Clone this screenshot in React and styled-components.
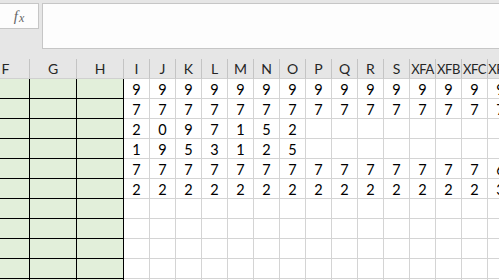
import React from 'react'
import styled, { createGlobalStyle } from 'styled-components'

const GlobalStyle = createGlobalStyle`
  html, body {
    margin: 0;
    padding: 0;
    background: #e6e6e6;
    overflow: hidden;
  }
`

const Window = styled.div`
  width: 499px;
  height: 280px;
  overflow: hidden;
  background: #e6e6e6;
  display: flex;
  flex-direction: column;
`

const FormulaBar = styled.div`
  height: 59px;
  flex: none;
  display: flex;
  align-items: flex-start;
  gap: 3px;
  padding-top: 3px;
  box-sizing: border-box;
`

const FxBox = styled.div`
  width: 39px;
  height: 26px;
  box-sizing: border-box;
  background: #fdfdfd;
  border: 1px solid #c6c6c6;
  border-left: none;
  display: flex;
  align-items: center;
  justify-content: center;
  font-family: "Liberation Serif", serif;
  font-style: italic;
  font-size: 15px;
  color: #666;

  span {
    font-size: 12px;
    margin-left: 1px;
    position: relative;
    top: 2px;
  }
`

const FormulaInput = styled.div`
  flex: 1;
  height: 46px;
  box-sizing: border-box;
  background: #fdfdfd;
  border: 1px solid #c6c6c6;
  border-right: none;
`

const SheetClip = styled.div`
  flex: 1;
  overflow: hidden;
`

const Sheet = styled.div`
  margin-left: -18px;
  display: grid;
  grid-template-columns: 48px 47px 47px repeat(15, 26px);
  grid-auto-rows: 20px;
  font-family: Lato, "Open Sans", sans-serif;
`

const Header = styled.div`
  box-sizing: border-box;
  background: #e6e6e6;
  border-right: 1px solid #c4c4c4;
  border-bottom: 1px solid #d0d0d0;
  display: flex;
  align-items: center;
  justify-content: center;
  font-size: ${p => (p.$wide ? '13px' : '14px')};
  color: #262626;
  white-space: nowrap;
  overflow: visible;
  letter-spacing: ${p => (p.$wide ? '-0.4px' : '0')};
`

const Cell = styled.div`
  box-sizing: border-box;
  background: ${p => (p.$green ? '#e2efda' : '#ffffff')};
  border-right: 1px solid ${p => (p.$green ? '#000' : '#d4d4d4')};
  border-bottom: 1px solid ${p => (p.$green ? '#000' : '#d4d4d4')};
  display: flex;
  align-items: center;
  justify-content: center;
  font-size: 14.5px;
  color: #000;
  padding-top: 1px;
`

const greenCols = ['F', 'G', 'H']
const dataCols = ['I', 'J', 'K', 'L', 'M', 'N', 'O', 'P', 'Q', 'R', 'S', 'XFA', 'XFB', 'XFC', 'XFD']

const rows = [
  Array(15).fill('9'),
  Array(15).fill('7'),
  ['2', '0', '9', '7', '1', '5', '2'],
  ['1', '9', '5', '3', '1', '2', '5'],
  [...Array(14).fill('7'), '6'],
  [...Array(14).fill('2'), '3'],
  [], [], [], [], []
]

export default function App() {
  return (
    <Window>
      <GlobalStyle />
      <FormulaBar>
        <FxBox>f<span>x</span></FxBox>
        <FormulaInput />
      </FormulaBar>
      <SheetClip>
        <Sheet>
          {greenCols.map(c => <Header key={c}>{c}</Header>)}
          {dataCols.map(c => <Header key={c} $wide={c.length > 1}>{c}</Header>)}
          {rows.map((row, r) => (
            <React.Fragment key={r}>
              {greenCols.map(c => <Cell key={c} $green />)}
              {dataCols.map((c, i) => <Cell key={c}>{row[i] || ''}</Cell>)}
            </React.Fragment>
          ))}
        </Sheet>
      </SheetClip>
    </Window>
  )
}
